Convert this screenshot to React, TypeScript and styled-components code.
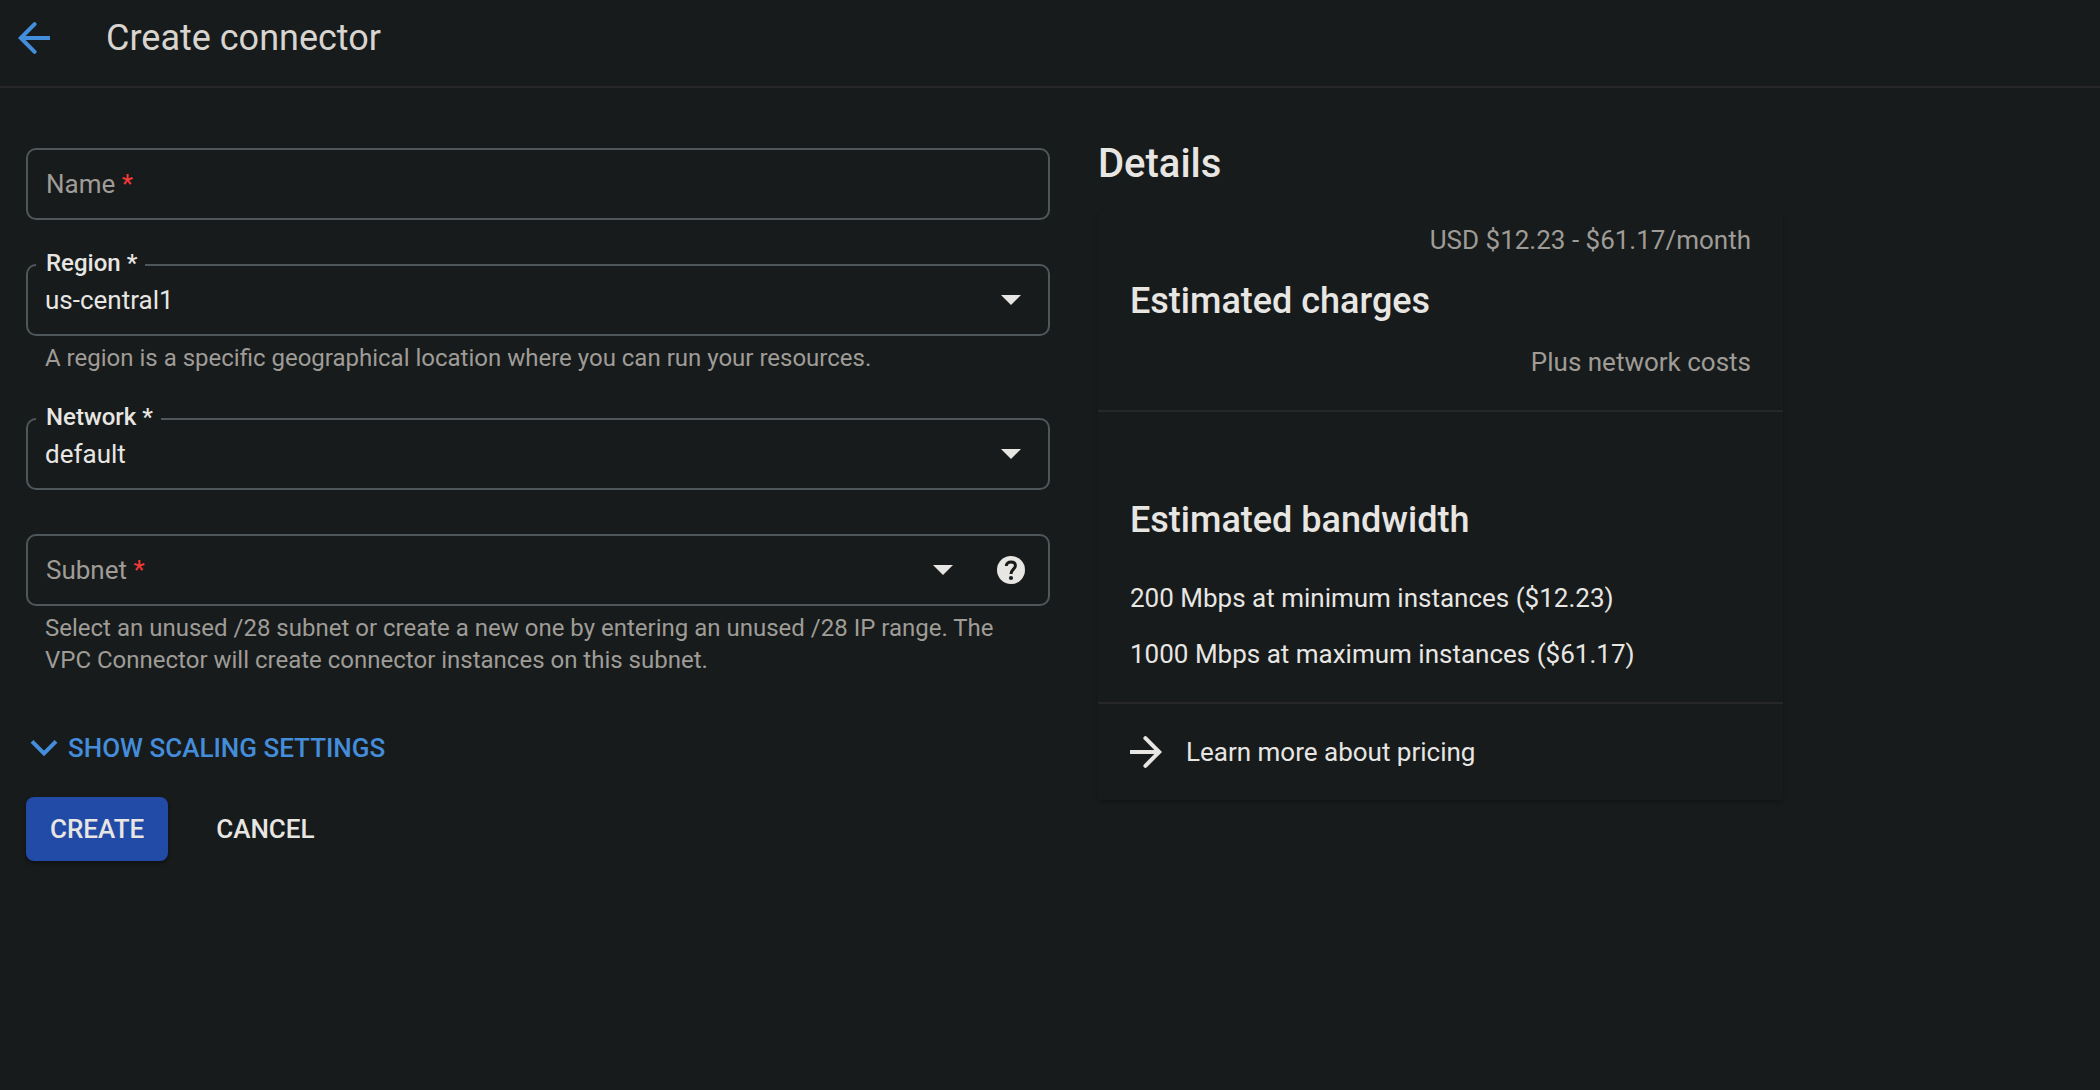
import React, { useState } from "react";
import styled, { createGlobalStyle, css } from "styled-components";

const color = {
  page: "#171b1c",
  text: "#e8e6e3",
  title: "#d8d4cf",
  muted: "#9f9c97",
  outline: "#50575b",
  divider: "#272727",
  link: "#448ddb",
  primary: "#224ba8",
  required: "#f93a37",
};

const GlobalStyle = createGlobalStyle`
  *, *::before, *::after { box-sizing: border-box; }
  body {
    margin: 0;
    min-height: 100vh;
    background: ${color.page};
    color: ${color.text};
    font-family: Roboto, "Liberation Sans", sans-serif;
    font-size: 26px;
    line-height: 32px;
  }
  button, input, select { font: inherit; color: inherit; }
  h1, h2, h3, p, ul { margin: 0; padding: 0; }
`;

const Header = styled.header`
  display: flex;
  align-items: center;
  gap: 56px;
  height: 88px;
  padding: 0 18px 10px;
  border-bottom: 2px solid ${color.divider};
`;

const Title = styled.h1`
  color: ${color.title};
  font-size: 36px;
  font-weight: 400;
  line-height: 44px;
`;

const PlainButton = styled.button`
  display: inline-flex;
  align-items: center;
  padding: 0;
  border: 0;
  background: none;
  cursor: pointer;
`;

const BackButton = styled(PlainButton)`
  color: ${color.link};
`;

const Icon = styled.svg`
  display: block;
  flex: none;
  fill: currentColor;
`;

const LineIcon = styled(Icon)`
  fill: none;
  stroke: currentColor;
  stroke-width: 4;
`;

const Page = styled.main`
  display: grid;
  grid-template-columns: minmax(0, 1024px) minmax(0, 685px);
  align-items: start;
  gap: 48px;
  padding: 60px 26px;
`;

const Form = styled.form`
  display: flex;
  flex-direction: column;
`;

const Fields = styled.div`
  display: flex;
  flex-direction: column;
  gap: 44px;
`;

const Outline = styled.div`
  position: relative;
  display: flex;
  align-items: center;
  height: 72px;
  border: 2px solid ${color.outline};
  border-radius: 10px;
`;

const control = css`
  flex: 1;
  min-width: 0;
  height: 100%;
  padding: 0 17px;
  border: 0;
  outline: 0;
  background: transparent;
`;

const TextInput = styled.input`
  ${control}
`;

const Select = styled.select`
  ${control}
  appearance: none;

  option {
    background: ${color.page};
  }
`;

const Label = styled.label<{ $floating?: boolean }>`
  position: absolute;
  pointer-events: none;
  ${({ $floating }) =>
    $floating
      ? css`
          top: -17px;
          left: 8px;
          padding: 0 8px 0 10px;
          background: ${color.page};
          font-size: 24px;
          font-weight: 500;
          line-height: 28px;
        `
      : css`
          left: 18px;
          color: ${color.muted};
        `}
`;

const Required = styled.span`
  color: ${color.required};
`;

const Trailing = styled.div`
  position: absolute;
  right: 23px;
  display: flex;
  align-items: center;
  gap: 40px;
  pointer-events: none;

  button {
    pointer-events: auto;
  }
`;

const CaretBox = styled.span`
  display: grid;
  place-items: center;
  width: 28px;
  height: 28px;
`;

const Hint = styled.p`
  padding: 6px 19px 0;
  color: ${color.muted};
  font-size: 24px;
`;

const Toggle = styled(PlainButton)`
  align-self: flex-start;
  gap: 10px;
  margin: 55px 0 32px;
  padding: 1px 4px;
  color: ${color.link};
  font-weight: 500;
  text-transform: uppercase;
`;

const Actions = styled.div`
  display: flex;
  gap: 24px;
`;

const ActionButton = styled.button<{ $primary?: boolean }>`
  height: 64px;
  padding: 0 24px;
  border: 0;
  border-radius: 8px;
  background: ${({ $primary }) => ($primary ? color.primary : "transparent")};
  box-shadow: ${({ $primary }) => ($primary ? "0 2px 4px rgba(0, 0, 0, 0.4)" : "none")};
  font-weight: 500;
  text-transform: uppercase;
  cursor: pointer;
`;

const SideTitle = styled.h2`
  margin-bottom: 32px;
  font-size: 40px;
  font-weight: 500;
`;

const Card = styled.div`
  border-radius: 4px;
  box-shadow: 0 2px 4px rgba(0, 0, 0, 0.25);
`;

const Section = styled.section`
  display: flex;
  flex-direction: column;
  padding: 12px 32px 32px;
  border-bottom: 2px solid ${color.divider};
`;

const Charges = styled(Section)`
  gap: 21px;
`;

const Bandwidth = styled(Section)`
  gap: 38px;
  padding-top: 84px;
`;

const SectionTitle = styled.h3`
  font-size: 36px;
  font-weight: 500;
  line-height: 48px;
`;

const Note = styled.p`
  align-self: flex-end;
  color: ${color.muted};
`;

const Rates = styled.ul`
  display: flex;
  flex-direction: column;
  gap: 24px;
  list-style: none;
`;

const PricingLink = styled.a`
  display: flex;
  align-items: center;
  gap: 24px;
  padding: 32px;
  color: inherit;
  text-decoration: none;
`;

const BackIcon = () => (
  <LineIcon width="32" height="32" viewBox="0 0 32 32" aria-hidden="true">
    <path d="M32 16H4" />
    <path d="M16.6 2.2 2.8 16l13.8 13.8" strokeLinecap="round" />
  </LineIcon>
);

const ForwardIcon = () => (
  <LineIcon width="32" height="32" viewBox="0 0 32 32" aria-hidden="true">
    <path d="M0 16h28" />
    <path d="M15.4 2.2 29.2 16 15.4 29.8" strokeLinecap="round" />
  </LineIcon>
);

const ChevronIcon = () => (
  <LineIcon width="28" height="18" viewBox="0 0 28 18" aria-hidden="true">
    <path d="M2 2.4l12 12 12-12" />
  </LineIcon>
);

const HelpIcon = () => (
  <Icon width="28" height="28" viewBox="0 0 28 28" aria-hidden="true">
    <circle cx="14" cy="14" r="14" />
    <path
      d="M9.3 10C9.3 7.5 11.3 6 13.9 6c2.7 0 4.5 1.5 4.5 3.7 0 3.2-4.4 3.9-4.4 8.3"
      fill="none"
      stroke={color.page}
      strokeWidth="3"
    />
    <circle cx="14" cy="22" r="2.1" fill={color.page} />
  </Icon>
);

const Caret = () => (
  <CaretBox>
    <Icon width="20" height="10" viewBox="0 0 20 10" aria-hidden="true">
      <path d="M0 0h20L10 10z" />
    </Icon>
  </CaretBox>
);

export default function App() {
  const [name, setName] = useState("");
  const [subnet, setSubnet] = useState("");

  return (
    <>
      <GlobalStyle />
      <Header>
        <BackButton type="button" aria-label="Back">
          <BackIcon />
        </BackButton>
        <Title>Create connector</Title>
      </Header>
      <Page>
        <Form onSubmit={(event) => event.preventDefault()}>
          <Fields>
            <Outline>
              <TextInput id="name" required value={name} onChange={(event) => setName(event.target.value)} />
              <Label htmlFor="name" $floating={name !== ""}>
                Name <Required>*</Required>
              </Label>
            </Outline>
            <div>
              <Outline>
                <Select id="region" required aria-describedby="region-hint">
                  <option>us-central1</option>
                </Select>
                <Label htmlFor="region" $floating>
                  Region *
                </Label>
                <Trailing>
                  <Caret />
                </Trailing>
              </Outline>
              <Hint id="region-hint">A region is a specific geographical location where you can run your resources.</Hint>
            </div>
            <Outline>
              <Select id="network" required>
                <option>default</option>
              </Select>
              <Label htmlFor="network" $floating>
                Network *
              </Label>
              <Trailing>
                <Caret />
              </Trailing>
            </Outline>
            <div>
              <Outline>
                <TextInput
                  id="subnet"
                  role="combobox"
                  aria-expanded={false}
                  aria-describedby="subnet-hint"
                  required
                  value={subnet}
                  onChange={(event) => setSubnet(event.target.value)}
                />
                <Label htmlFor="subnet" $floating={subnet !== ""}>
                  Subnet <Required>*</Required>
                </Label>
                <Trailing>
                  <Caret />
                  <PlainButton type="button" aria-label="Help">
                    <HelpIcon />
                  </PlainButton>
                </Trailing>
              </Outline>
              <Hint id="subnet-hint">
                Select an unused /28 subnet or create a new one by entering an unused /28 IP range. The VPC Connector
                will create connector instances on this subnet.
              </Hint>
            </div>
          </Fields>
          <Toggle type="button">
            <ChevronIcon />
            Show scaling settings
          </Toggle>
          <Actions>
            <ActionButton type="submit" $primary>
              Create
            </ActionButton>
            <ActionButton type="button">Cancel</ActionButton>
          </Actions>
        </Form>
        <aside>
          <SideTitle>Details</SideTitle>
          <Card>
            <Charges>
              <Note>USD $12.23 - $61.17/month</Note>
              <SectionTitle>Estimated charges</SectionTitle>
              <Note>Plus network costs</Note>
            </Charges>
            <Bandwidth>
              <SectionTitle>Estimated bandwidth</SectionTitle>
              <Rates>
                <li>200 Mbps at minimum instances ($12.23)</li>
                <li>1000 Mbps at maximum instances ($61.17)</li>
              </Rates>
            </Bandwidth>
            <PricingLink href="#pricing">
              <ForwardIcon />
              Learn more about pricing
            </PricingLink>
          </Card>
        </aside>
      </Page>
    </>
  );
}
